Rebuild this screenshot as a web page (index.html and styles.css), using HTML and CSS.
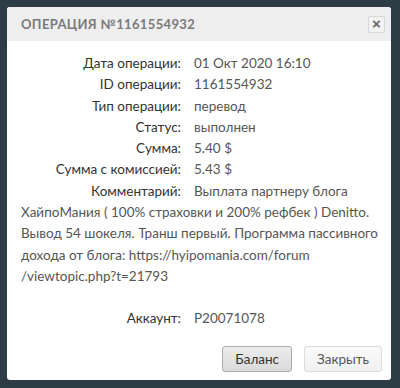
FILE: index.html
```html
<!DOCTYPE html>
<html lang="ru">

<head>
    <meta charset="UTF-8">
    <meta name="viewport" content="width=device-width, initial-scale=1.0">
    <title>Операция</title>
    <link rel="stylesheet" href="styles.css">
</head>

<body>
    <!-- Operation popup -->
    <div class="modal">
        <div class="modal-header">
            <h3 class="modal-title">Операция №1161554932</h3>
            <button class="close-btn">&times;</button>
        </div>

        <div class="modal-body">
            <div class="row"><span class="label">Дата операции:</span>01 Окт 2020 16:10</div>
            <div class="row"><span class="label">ID операции:</span>1161554932</div>
            <div class="row"><span class="label">Тип операции:</span>перевод</div>
            <div class="row"><span class="label">Статус:</span>выполнен</div>
            <div class="row"><span class="label">Сумма:</span>5.40 $</div>
            <div class="row"><span class="label">Сумма с комиссией:</span>5.43 $</div>
            <div class="row"><span class="label">Комментарий:</span>Выплата партнеру блога ХайпоМания ( 100% страховки и 200% рефбек ) Denitto. Вывод 54 шокеля. Транш первый. Программа пассивного дохода от блога: https://hyipomania.com/forum /viewtopic.php?t=21793</div>
            <div class="row account"><span class="label">Аккаунт:</span>P20071078</div>
        </div>

        <div class="modal-footer">
            <button class="btn btn-dark">Баланс</button>
            <button class="btn">Закрыть</button>
        </div>
    </div>
</body>

</html>
```

FILE: styles.css
```css
body {
    font-family: Lato, "Open Sans", Arial, sans-serif;
    background-color: #2e3c45;
    margin: 0;
    padding: 7px;
}

.modal {
    width: 384px;
    height: 373px;
    background-color: #fff;
    border-radius: 3px;
    overflow: hidden;
    display: flex;
    flex-direction: column;
}

.modal-header {
    height: 34px;
    background-color: #eeeeee;
    display: flex;
    align-items: center;
    justify-content: space-between;
    padding: 0 6px 0 14px;
}

.modal-title {
    margin: 0;
    font-size: 13px;
    font-weight: bold;
    letter-spacing: 0.35px;
    text-transform: uppercase;
    color: #7a7a7a;
}

.close-btn {
    width: 17px;
    height: 17px;
    padding: 0;
    border: 1px solid #d8d8d8;
    border-radius: 2px;
    background-color: #f2f2f2;
    color: #666;
    font-size: 15px;
    font-weight: bold;
    line-height: 14px;
    font-family: Arial, sans-serif;
}

.modal-body {
    flex: 1;
    padding: 12px 13px 0 14px;
    font-size: 13.5px;
    line-height: 21.3px;
    color: #555;
}

.row .label {
    display: inline-block;
    width: 160px;
    margin-right: 13px;
    text-align: right;
    color: #333;
}

.row.account {
    margin-top: 21px;
}

.modal-footer {
    display: flex;
    justify-content: flex-end;
    gap: 12px;
    padding: 0 9px 8px 0;
}

.btn {
    height: 26px;
    padding: 0 12px;
    font-family: Lato, "Open Sans", Arial, sans-serif;
    font-size: 13.5px;
    color: #555;
    background: linear-gradient(#fafafa, #f0f0f0);
    border: 1px solid #dcdcdc;
    border-radius: 3px;
}

.btn-dark {
    color: #333;
    background: linear-gradient(#ececec, #dadada);
    border-color: #ababab;
}
```
